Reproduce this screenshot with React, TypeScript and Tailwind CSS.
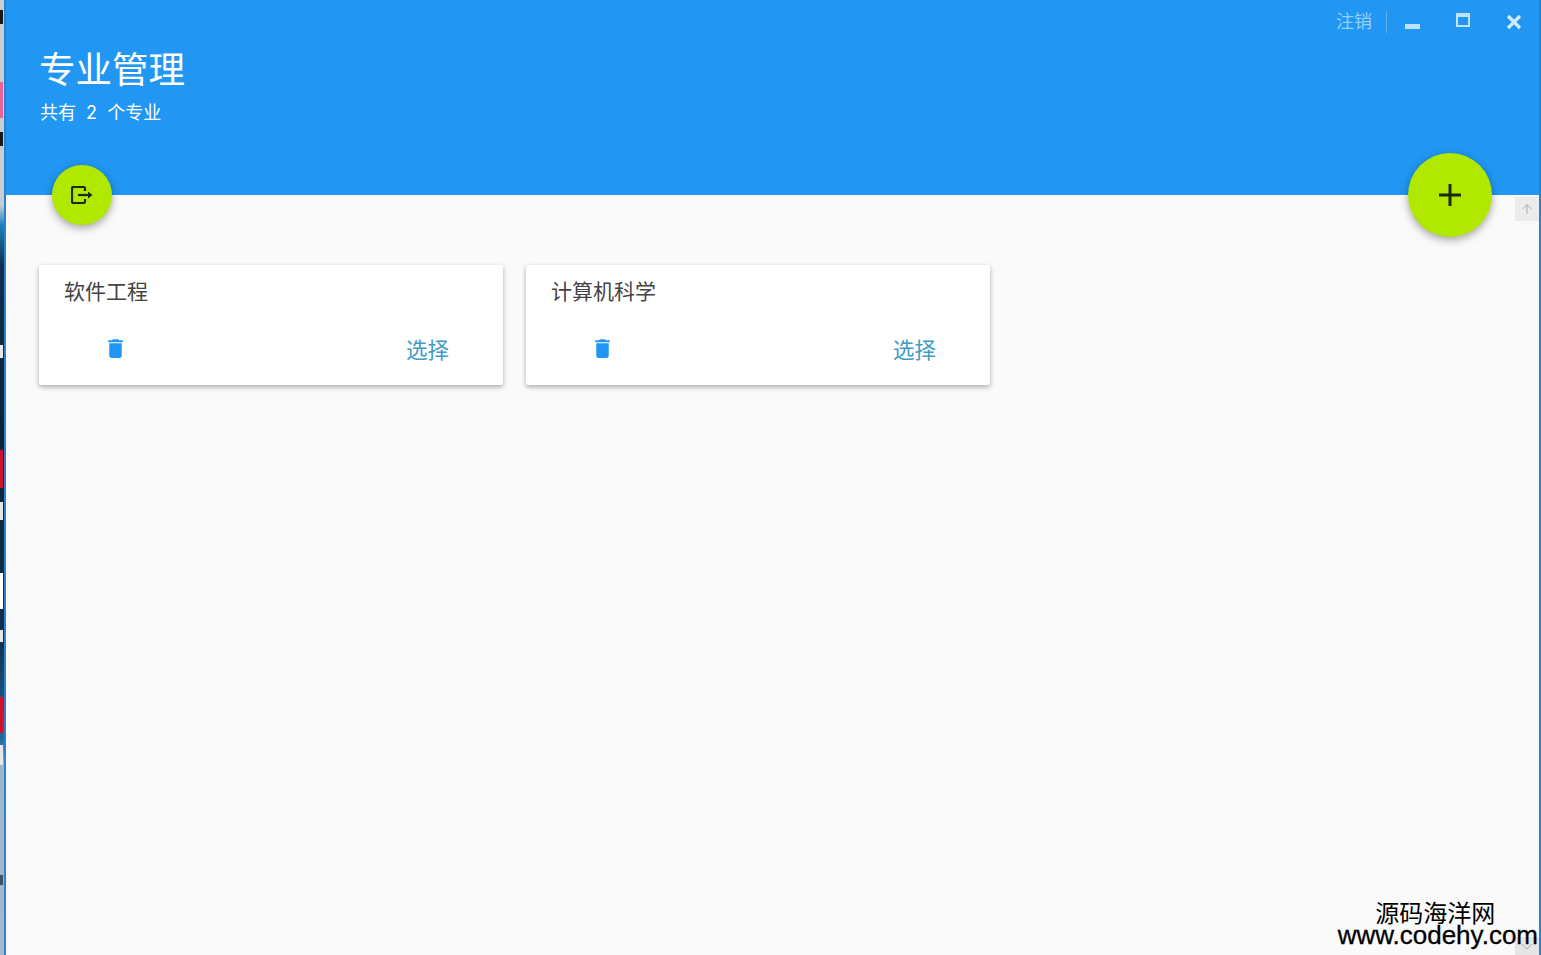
const cjk = 'font-["Inter","Noto_Sans_CJK_SC",sans-serif]';

const majors = ['软件工程', '计算机科学'];

function TrashIcon() {
  return (
    <svg className="-mt-[2px]" width="25" height="25" viewBox="0 0 24 24" fill="#2196f3">
      <path d="M6 19c0 1.1.9 2 2 2h8c1.1 0 2-.9 2-2V7H6v12zM19 4h-3.500l-1-1h-5l-1 1H5v2h14V4z" />
    </svg>
  );
}

function MajorCard({ name }: { name: string }) {
  return (
    <div className="flex h-[120px] w-[464px] flex-col rounded-[2px] bg-white shadow-[0_2px_5px_rgba(0,0,0,0.32)]">
      <div className="px-[25px] pt-[12px] text-[21px] leading-[30px] text-[#444]">{name}</div>
      <div className="mt-[27px] flex items-center justify-between pl-[64px] pr-[54px]">
        <TrashIcon />
        <span className="mt-[1px] text-[21.500px] leading-[30px] text-[#3f9bc6]">选择</span>
      </div>
    </div>
  );
}

// the desktop showing behind the window: only a thin strip of it is visible
function DesktopStrip() {
  return (
    <div className="w-[6px] shrink-0 border-r-2 border-[#2f80c4] bg-[linear-gradient(180deg,#c3ced6_0px,#c3ced6_205px,#1c84bd_225px,#0f2f50_265px,#0d2338_430px,#10304f_640px,#1f6ea3_740px,#9fb6c9_765px,#a5bacb_955px)]">
      <div className="h-full w-[3px] bg-[linear-gradient(180deg,transparent_10px,#1a1a1a_10px,#1a1a1a_24px,transparent_24px,transparent_82px,#e8609c_82px,#e8609c_118px,transparent_118px,transparent_132px,#1a1a1a_132px,#1a1a1a_146px,transparent_146px,transparent_345px,#e6e6e6_345px,#e6e6e6_358px,transparent_358px,transparent_450px,#d0122f_450px,#d0122f_488px,transparent_488px,transparent_502px,#e6e6e6_502px,#e6e6e6_520px,transparent_520px,transparent_573px,#ffffff_573px,#ffffff_609px,transparent_609px,transparent_630px,#e6e6e6_630px,#e6e6e6_642px,transparent_642px,transparent_697px,#d0122f_697px,#d0122f_733px,transparent_733px,transparent_745px,#e6e6e6_745px,#e6e6e6_765px,transparent_765px,transparent_875px,#44525f_875px,#44525f_885px,transparent_885px)]" />
    </div>
  );
}

export default function App() {
  return (
    <div className={`relative flex h-[955px] w-[1541px] overflow-hidden bg-[#fafafa] ${cjk}`}>
      <DesktopStrip />

      <div className="flex min-w-0 flex-1 flex-col">
        <header className="relative flex h-[195px] shrink-0 items-start justify-between bg-[#2196f3] pl-[34px] pr-[17px] text-white">
          <div className="pt-[45px]">
            <h1 className="-ml-px text-[36.500px] leading-[50px]">专业管理</h1>
            <p className="mt-[5px] whitespace-pre text-[18px] leading-[26px]">共有  2  个专业</p>
          </div>

          <div className="mt-[10px] flex h-[23px] items-center text-[#93d0fa]">
            <span className="text-[18px] leading-[23px]">注销</span>
            <div className="ml-[14px] h-[22px] w-px bg-[#63b4f6]" />
            <div className="ml-[18px] mt-[9px] h-[5px] w-[15px] bg-[#bfe3fc]" />
            <div className="mb-[3px] ml-[36px] h-[14px] w-[14px] border-[2px] border-t-[4px] border-[#bfe3fc]" />
            <svg className="ml-[36px]" width="16" height="16" viewBox="0 0 16 16" stroke="#d3ecfd" strokeWidth="3.200">
              <path d="M2 2l12 12M14 2L2 14" />
            </svg>
          </div>

          <button className="absolute left-[46px] top-[165px] z-10 flex h-[60px] w-[60px] items-center justify-center rounded-full bg-[#b0e800] shadow-[0_3px_8px_rgba(0,0,0,0.35)]">
            <svg width="22" height="18" viewBox="0 0 22 18" fill="none" stroke="#1c2a10" strokeWidth="2.200">
              <path d="M14 5V2.500A1.500 1.500 0 0 0 12.500 1H2.500A1.500 1.500 0 0 0 1 2.500v13A1.500 1.500 0 0 0 2.500 17h10a1.500 1.500 0 0 0 1.500-1.500V13" />
              <path d="M7 9h11" />
              <path d="M17 5.500L21.500 9 17 12.500z" fill="#1c2a10" stroke="none" />
            </svg>
          </button>

          <button className="absolute right-[47px] top-[153px] z-10 flex h-[84px] w-[84px] items-center justify-center rounded-full bg-[#b0e800] shadow-[0_3px_8px_rgba(0,0,0,0.35)]">
            <svg width="22" height="22" viewBox="0 0 22 22" stroke="#1c2a10" strokeWidth="3">
              <path d="M11 0v22M0 11h22" />
            </svg>
          </button>
        </header>

        <main className="relative flex-1">
          <div className="flex gap-[23px] pl-[33px] pt-[70px]">
            {majors.map((name) => (
              <MajorCard key={name} name={name} />
            ))}
          </div>

          <div className="absolute right-0 top-[2px] flex h-[24px] w-[24px] items-center justify-center bg-[#ececec] text-[#aaa]">
            <svg width="14" height="14" viewBox="0 0 14 14" fill="none" stroke="currentColor">
              <path d="M2.500 7L7 2.500 11.500 7M7 2.500V12" />
            </svg>
          </div>
          <div className="absolute bottom-0 right-0 flex h-[18px] w-[24px] items-center justify-center bg-[#e6e6e6] text-[#aaa]">
            <svg width="14" height="14" viewBox="0 0 14 14" fill="none" stroke="currentColor">
              <path d="M2 5l5 5 5-5" />
            </svg>
          </div>

          <div className="absolute bottom-[9px] right-[1px] flex flex-col items-center text-black">
            <span className="mr-[5px] translate-y-[2px] text-[24px] leading-[24px]">源码海洋网</span>
            <span className="font-['Liberation_Sans',sans-serif] text-[26px] leading-[22px] [-webkit-text-stroke:0.3px_black]">www.codehy.com</span>
          </div>
        </main>
      </div>

      <div className="w-[2px] shrink-0 bg-[#2f80c4]" />
    </div>
  );
}
